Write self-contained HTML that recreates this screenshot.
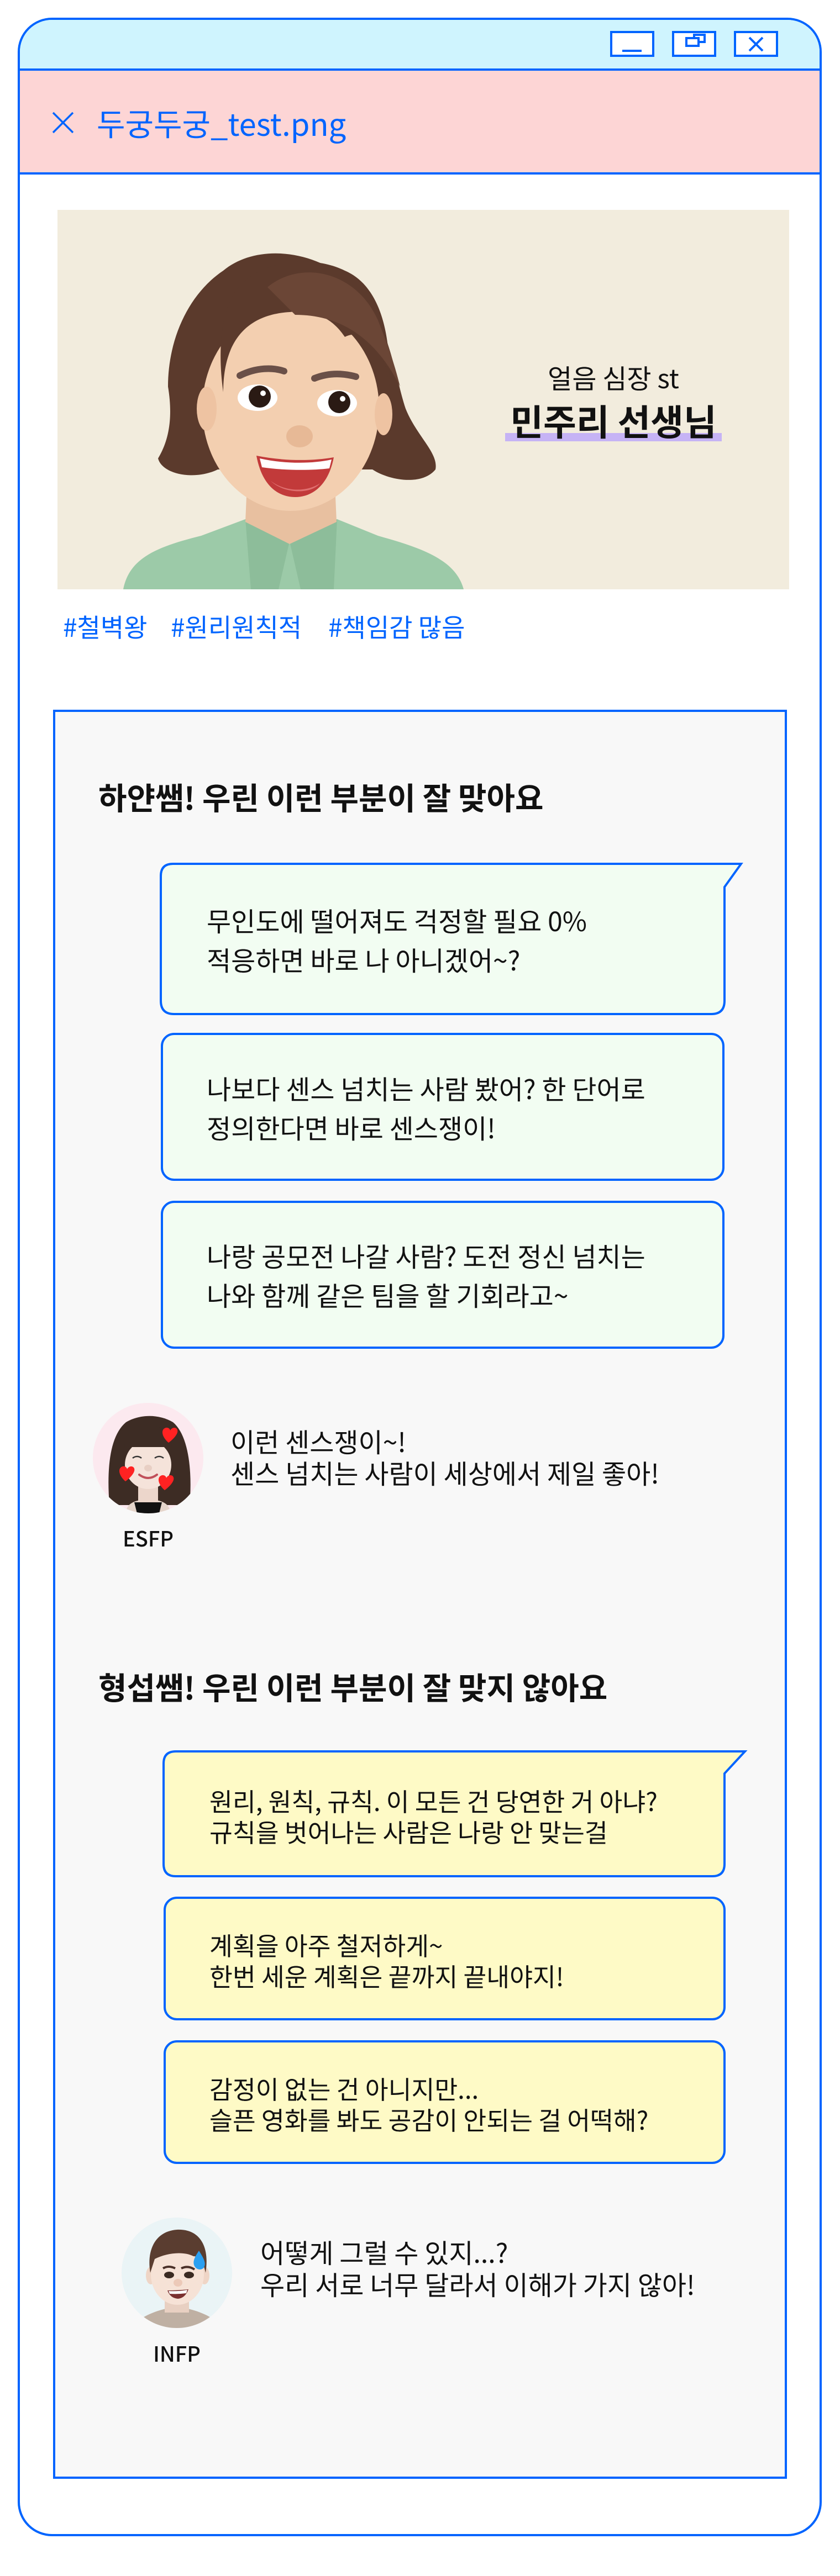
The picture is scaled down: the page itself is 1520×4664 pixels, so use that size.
<!DOCTYPE html>
<html><head><meta charset="utf-8">
<style>
*{margin:0;padding:0;box-sizing:border-box}
body{width:1520px;height:4664px;background:#fff;position:relative;overflow:hidden;font-family:"Liberation Sans","Noto Sans CJK KR",sans-serif;color:#111}
.abs{position:absolute}
.win{left:32px;top:32px;width:1455px;height:4560px;border:4px solid #0064ff;border-radius:62px;overflow:hidden;background:#fff}
.tb{left:0;top:0;width:100%;height:92px;background:#cff4fe;border-bottom:4px solid #0064ff}
.pk{left:0;top:92px;width:100%;height:188px;background:#fdd5d5;border-bottom:4px solid #0064ff}
.btn{top:56px;width:80px;height:47px;border:4px solid #0064ff;background:#fff}
.t{white-space:nowrap}
.box{left:96px;top:1285px;width:1328px;height:3203px;border:4px solid #0064ff;background:#f8f8f8}
.h{font-weight:bold;font-size:56px;line-height:60px;left:178px;font-family:"Noto Sans CJK KR",sans-serif}
.bt{font-size:48px;font-family:"Noto Sans CJK KR",sans-serif;white-space:nowrap}
.yt{font-size:45.5px;font-family:"Noto Sans CJK KR",sans-serif;white-space:nowrap}
.tag{top:1104px;font-size:46px;line-height:60px;color:#0064ff;font-family:"Noto Sans CJK KR",sans-serif}
</style></head><body>

<div class="abs win">
  <div class="abs tb"></div>
  <div class="abs pk"></div>
</div>

<div class="abs btn" style="left:1104px"></div>
<div class="abs" style="left:1126px;top:90px;width:35px;height:4px;background:#0064ff"></div>
<div class="abs btn" style="left:1216px"></div>
<div class="abs" style="left:1254px;top:61px;width:23px;height:17px;border:4px solid #0064ff;background:#fff"></div>
<div class="abs" style="left:1240px;top:67px;width:26px;height:18px;border:4px solid #0064ff;background:#fff"></div>
<div class="abs btn" style="left:1328px"></div>
<svg class="abs" style="left:1353px;top:65px" width="30" height="30" viewBox="0 0 30 30"><path d="M3 3L27 27M27 3L3 27" stroke="#0064ff" stroke-width="4"/></svg>

<svg class="abs" style="left:94px;top:202px" width="40" height="40" viewBox="0 0 40 40"><path d="M2 2L38 38M38 2L2 38" stroke="#0064ff" stroke-width="3.5"/></svg>
<div class="abs t" style="left:175px;top:186px;font-size:56px;line-height:74px;color:#0064ff;font-family:'Noto Sans CJK KR',sans-serif">두궁두궁_test.png</div>

<div class="abs" style="left:104px;top:380px;width:1324px;height:687px;background:#f2ecdd;overflow:hidden">
<svg width="1324" height="687" viewBox="0 0 1324 687">
  <path d="M119 687 C130 630 180 610 260 590 L340 560 L420 600 L506 560 L580 590 C650 610 720 630 735 687 Z" fill="#9ccaa8"/>
  <path d="M340 560 L420 600 L400 687 L350 687 Z" fill="#8dbd9a"/>
  <path d="M506 560 L420 600 L440 687 L500 687 Z" fill="#8dbd9a"/>
  <path d="M345 450 L500 450 L505 565 L420 605 L340 565 Z" fill="#e8c0a0"/>
  <path d="M300 110 C360 60 470 70 540 140 C600 200 610 300 630 360 C650 410 690 440 684 470 C660 500 600 490 570 470 L290 470 C250 490 190 480 182 450 C200 420 210 380 200 320 C200 230 240 150 300 110 Z" fill="#5b3a2c"/>
  <ellipse cx="422" cy="360" rx="160" ry="185" fill="#f3cfb0"/>
  <path d="M300 330 C300 240 340 190 420 185 C470 180 500 200 520 230 C560 210 600 260 600 330 C605 240 590 140 520 110 C460 80 360 90 320 150 C295 190 290 260 300 330 Z" fill="#5b3a2c"/>
  <path d="M380 140 C440 90 540 110 580 200 C600 250 610 280 620 320 C580 240 520 190 430 190 Z" fill="#6b4636"/>
  <ellipse cx="270" cy="360" rx="18" ry="40" fill="#eec3a2"/>
  <ellipse cx="590" cy="370" rx="16" ry="38" fill="#eec3a2"/>
  <path d="M330 300 C360 285 390 285 410 292" stroke="#6a5048" stroke-width="12" fill="none" stroke-linecap="round"/>
  <path d="M465 305 C490 295 515 295 540 302" stroke="#6a5048" stroke-width="12" fill="none" stroke-linecap="round"/>
  <ellipse cx="362" cy="340" rx="36" ry="24" fill="#fff"/>
  <circle cx="366" cy="338" r="20" fill="#2a1a14"/><circle cx="372" cy="332" r="5" fill="#fff"/>
  <ellipse cx="506" cy="350" rx="36" ry="24" fill="#fff"/>
  <circle cx="510" cy="348" r="20" fill="#2a1a14"/><circle cx="516" cy="342" r="5" fill="#fff"/>
  <ellipse cx="438" cy="410" rx="24" ry="20" fill="#e7b996"/>
  <path d="M360 445 C410 455 460 455 500 448 C490 500 460 520 430 520 C400 520 370 500 360 445 Z" fill="#c23a3a"/>
  <path d="M366 450 C410 460 460 460 496 452 L492 468 C460 472 410 472 370 466 Z" fill="#fff"/>
  <path d="M385 490 C410 510 450 512 475 495 C460 515 410 515 385 490 Z" fill="#e07070"/>
</svg>
</div>
<div class="abs t" style="left:910px;width:400px;text-align:center;top:650px;font-size:48px;line-height:64px;font-family:'Noto Sans CJK KR',sans-serif">얼음 심장 st</div>
<div class="abs" style="left:914px;top:784px;width:392px;height:15px;background:#c6b3f5"></div>
<div class="abs t" style="left:910px;width:400px;text-align:center;top:720px;font-size:65px;line-height:80px;font-weight:bold;font-family:'Noto Sans CJK KR',sans-serif">민주리 선생님</div>

<div class="abs t tag" style="left:114px">#철벽왕</div>
<div class="abs t tag" style="left:309px">#원리원칙적</div>
<div class="abs t tag" style="left:594px">#책임감 많음</div>

<div class="abs box"></div>

<div class="abs t h" style="top:1413px">하얀쌤! 우린 이런 부분이 잘 맞아요</div>

<svg class="abs" style="left:289px;top:1562px" width="1060" height="280" viewBox="0 0 1060 280"><path d="M24 2 L1052 2 L1022 44 L1022 250 Q1022 274 998 274 L26 274 Q2 274 2 250 L2 24 Q2 2 24 2 Z" fill="#f2fdf2" stroke="#0064ff" stroke-width="4"/></svg>
<div class="abs bt" style="left:374px;top:1630px;line-height:71px">무인도에 떨어져도 걱정할 필요 0%<br>적응하면 바로 나 아니겠어~?</div>

<div class="abs" style="left:291px;top:1870px;width:1020px;height:268px;border:4px solid #0064ff;border-radius:24px;background:#f2fdf2"></div>
<div class="abs bt" style="left:374px;top:1934px;line-height:71px">나보다 센스 넘치는 사람 봤어? 한 단어로<br>정의한다면 바로 센스쟁이!</div>

<div class="abs" style="left:291px;top:2174px;width:1020px;height:268px;border:4px solid #0064ff;border-radius:24px;background:#f2fdf2"></div>
<div class="abs bt" style="left:374px;top:2237px;line-height:71px">나랑 공모전 나갈 사람? 도전 정신 넘치는<br>나와 함께 같은 팀을 할 기회라고~</div>

<svg class="abs" style="left:168px;top:2540px" width="200" height="200" viewBox="0 0 200 200">
  <defs><clipPath id="c1"><circle cx="100" cy="100" r="100"/></clipPath></defs>
  <circle cx="100" cy="100" r="100" fill="#fce9ef"/>
  <g clip-path="url(#c1)">
    <path d="M30 185 C25 120 30 60 60 35 C85 20 120 20 145 35 C175 60 180 130 175 185 Z" fill="#3d2c24"/>
    <path d="M60 200 C60 180 80 175 100 175 C120 175 140 180 140 200 Z" fill="#e5d5cb"/>
    <path d="M75 180 L125 180 L120 200 L80 200 Z" fill="#111"/>
    <rect x="82" y="140" width="36" height="40" fill="#ecd6cb"/>
    <ellipse cx="100" cy="112" rx="42" ry="44" fill="#f5e3da"/>
    <path d="M57 80 C60 50 80 40 100 40 C125 40 140 55 143 80 L57 80 Z" fill="#3d2c24"/>
    <path d="M72 100 Q80 94 88 100 M112 100 Q120 94 128 100" stroke="#333" stroke-width="2.5" fill="none"/>
    <ellipse cx="100" cy="118" rx="7" ry="6" fill="#e8cfc4"/>
    <path d="M84 130 Q100 142 116 130" stroke="#c0505a" stroke-width="4" fill="none" stroke-linecap="round"/>
  </g>
  <path d="M137 72 C125 62 122 48 132 45 C137 44 140 48 140 50 C141 47 146 43 151 46 C158 52 148 64 137 72 Z" fill="#f22"/>
  <path d="M59 142 C47 132 44 118 54 115 C59 114 62 118 62 120 C63 117 68 113 73 116 C80 122 70 134 59 142 Z" fill="#f22"/>
  <path d="M130 158 C118 148 115 134 125 131 C130 130 133 134 133 136 C134 133 139 129 144 132 C151 138 141 150 130 158 Z" fill="#f22"/>
</svg>
<div class="abs t" style="left:168px;width:200px;text-align:center;top:2760px;font-size:38px;line-height:48px;font-weight:500;font-family:'Noto Sans CJK KR',sans-serif">ESFP</div>
<div class="abs bt" style="left:417px;top:2580px;line-height:57px">이런 센스쟁이~!<br>센스 넘치는 사람이 세상에서 제일 좋아!</div>

<div class="abs t h" style="top:3024px">형섭쌤! 우린 이런 부분이 잘 맞지 않아요</div>

<svg class="abs" style="left:294px;top:3169px" width="1060" height="234" viewBox="0 0 1060 234"><path d="M24 2 L1054 2 L1017 42 L1017 206 Q1017 228 995 228 L24 228 Q2 228 2 206 L2 24 Q2 2 24 2 Z" fill="#fefac6" stroke="#0064ff" stroke-width="4"/></svg>
<div class="abs yt" style="left:379px;top:3232px;line-height:56px">원리, 원칙, 규칙. 이 모든 건 당연한 거 아냐?<br>규칙을 벗어나는 사람은 나랑 안 맞는걸</div>

<div class="abs" style="left:296px;top:3434px;width:1017px;height:224px;border:4px solid #0064ff;border-radius:24px;background:#fefac6"></div>
<div class="abs yt" style="left:379px;top:3493px;line-height:56px">계획을 아주 철저하게~<br>한번 세운 계획은 끝까지 끝내야지!</div>

<div class="abs" style="left:296px;top:3694px;width:1017px;height:224px;border:4px solid #0064ff;border-radius:24px;background:#fefac6"></div>
<div class="abs yt" style="left:379px;top:3753px;line-height:56px">감정이 없는 건 아니지만...<br>슬픈 영화를 봐도 공감이 안되는 걸 어떡해?</div>

<svg class="abs" style="left:220px;top:4015px" width="200" height="200" viewBox="0 0 200 200">
  <defs><clipPath id="c2"><circle cx="100" cy="100" r="100"/></clipPath></defs>
  <circle cx="100" cy="100" r="100" fill="#eaf4f6"/>
  <g clip-path="url(#c2)">
    <path d="M20 200 C30 180 60 170 80 165 L120 165 C140 170 170 180 180 200 Z" fill="#bfb0a3"/>
    <rect x="78" y="140" width="44" height="32" fill="#e8d0c2"/>
    <ellipse cx="53" cy="105" rx="9" ry="16" fill="#efd5c6"/>
    <ellipse cx="150" cy="105" rx="9" ry="16" fill="#efd5c6"/>
    <ellipse cx="101" cy="103" rx="48" ry="55" fill="#f6e2d6"/>
    <path d="M52 100 C45 60 60 25 100 22 C140 20 160 50 152 100 C148 80 140 70 130 70 C110 60 80 65 60 75 Z" fill="#5a3d30"/>
    <path d="M75 92 Q85 86 97 92 M108 92 Q120 86 132 94" stroke="#4a3028" stroke-width="4" fill="none"/>
    <ellipse cx="86" cy="104" rx="9" ry="6" fill="#3a2a22"/>
    <ellipse cx="122" cy="104" rx="9" ry="6" fill="#3a2a22"/>
    <ellipse cx="102" cy="118" rx="8" ry="7" fill="#ecc9b8"/>
    <path d="M83 132 Q102 132 121 130 Q115 146 102 147 Q88 146 83 132 Z" fill="#7a3030"/>
    <path d="M85 133 Q102 134 119 131 L117 137 Q102 139 87 138 Z" fill="#fff"/>
  </g>
  <path d="M140 60 C132 72 128 80 132 88 C136 96 148 96 150 88 C153 80 146 70 140 60 Z" fill="#2a9ff0"/>
</svg>
<div class="abs t" style="left:220px;width:200px;text-align:center;top:4236px;font-size:38px;line-height:48px;font-weight:500;font-family:'Noto Sans CJK KR',sans-serif">INFP</div>
<div class="abs bt" style="left:471px;top:4047px;line-height:58px">어떻게 그럴 수 있지...?<br>우리 서로 너무 달라서 이해가 가지 않아!</div>

</body></html>
